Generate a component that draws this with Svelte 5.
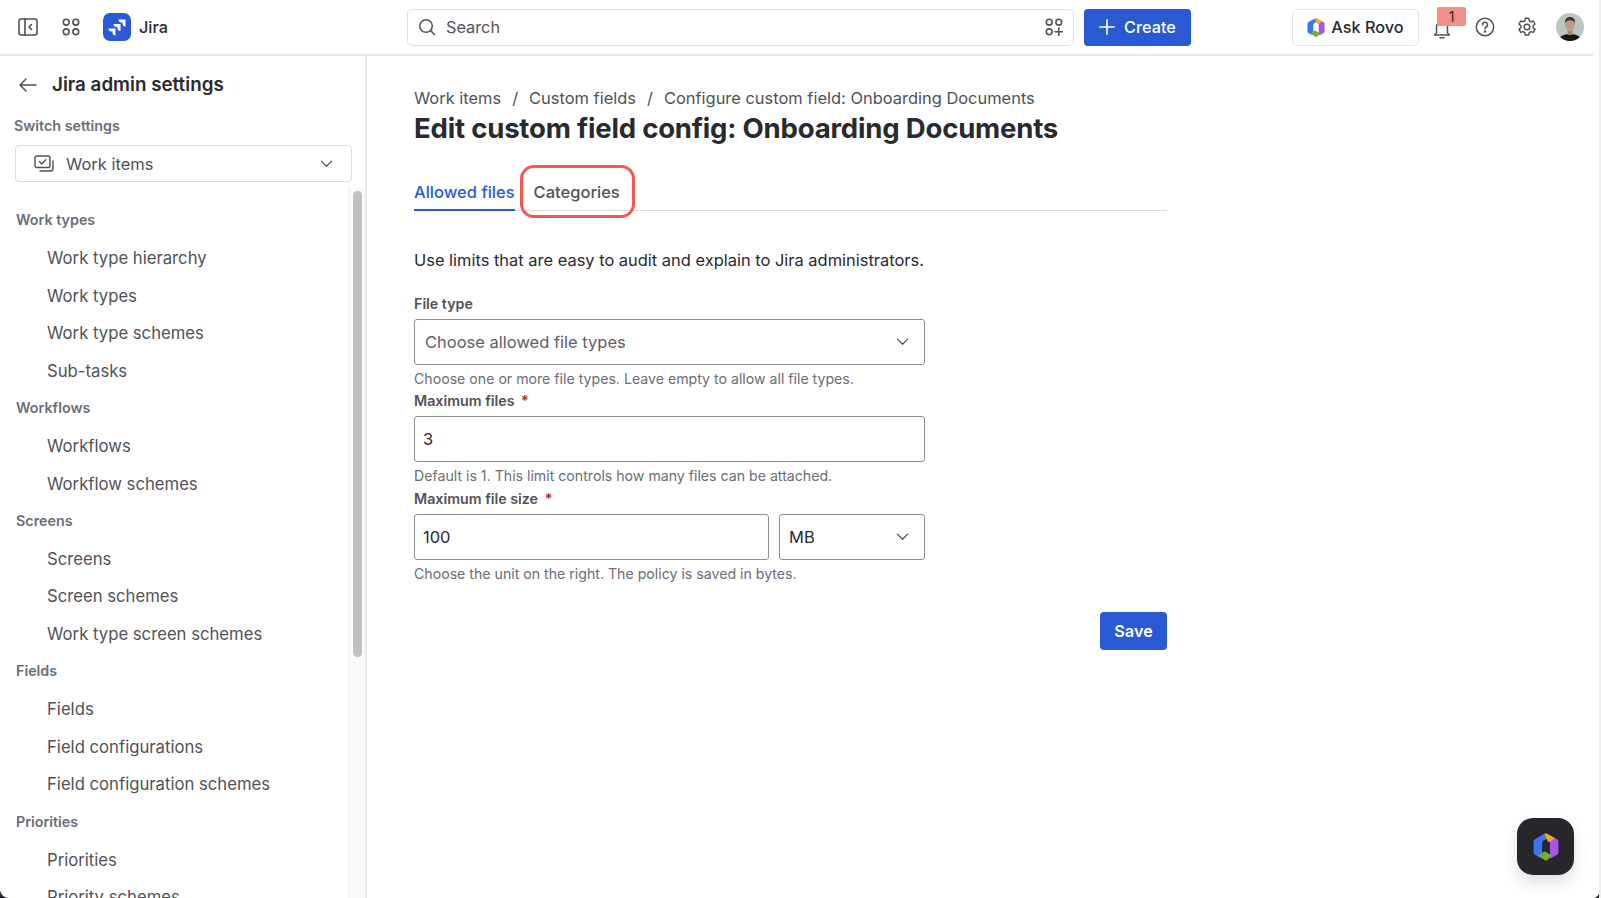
<script>
  const groups = [
    { title: 'Work types', items: ['Work type hierarchy', 'Work types', 'Work type schemes', 'Sub-tasks'] },
    { title: 'Workflows', items: ['Workflows', 'Workflow schemes'] },
    { title: 'Screens', items: ['Screens', 'Screen schemes', 'Work type screen schemes'] },
    { title: 'Fields', items: ['Fields', 'Field configurations', 'Field configuration schemes'] },
    { title: 'Priorities', items: ['Priorities', 'Priority schemes'] }
  ];
</script>

{#snippet chevron()}
  <svg class="chev" viewBox="0 0 14 14" width="13" height="13" fill="none" stroke="#505258" stroke-width="1.300" stroke-linecap="round" stroke-linejoin="round"><path d="M1.500 4.500 7 10 12.500 4.500"/></svg>
{/snippet}

{#snippet rovo(w, h)}
  <svg viewBox="2 0.500 20 23" width={w} height={h}>
    <path d="M10.500 1.900 3.500 6Q2.500 6.600 2.500 7.800V16.200Q2.500 17.400 3.500 18L8 20.600Q9 18 9 16V9Q9 7.800 10 7.200L13 5.500Z" fill="#3d76ee"/>
    <path d="M15.500 3.300 20.500 6Q21.500 6.600 21.500 7.800V16.200Q21.500 17.400 20.500 18L15.500 20.900Q15 19 15 17V8Q15 5 15.500 3.300Z" fill="#a855ee"/>
    <path d="M10.600 2 11 1.800Q12 1.200 13 1.800L19 5.300 15.500 7.800Q14.500 8.400 13.500 7.900Z" fill="#f5a524"/>
    <path d="M6 18.500 10 15.800Q11 15.200 12 15.800L16.500 18.800 13 22.200Q12 22.800 11 22.200Z" fill="#6fae3c"/>
  </svg>
{/snippet}

<div class="app">
  <header class="top">
    <div class="left">
      <svg class="ico" viewBox="0 0 20 18" width="20" height="18" fill="none" stroke="#505258" stroke-width="1.600" stroke-linejoin="round" stroke-linecap="round"><rect x="1" y="1" width="18" height="16" rx="2"/><path d="M7 1v16M13.500 6.500 11 9l2.500 2.500"/></svg>
      <svg class="ico" viewBox="0 0 18 18" width="18" height="18" fill="none" stroke="#505258" stroke-width="1.600"><circle cx="4.200" cy="4.200" r="2.900"/><circle cx="13.800" cy="4.200" r="2.900"/><circle cx="4.200" cy="13.800" r="2.900"/><circle cx="13.800" cy="13.800" r="2.900"/></svg>
      <div class="brand">
        <span class="logo">
          <svg viewBox="0 0 20 20" width="20" height="20" fill="#fff"><path d="M11.500 2.500H18.500V9.500C16.500 9.500 15.500 8.500 15.500 6.500V5.500H14.500C12.500 5.500 11.500 4.500 11.500 2.500Z"/><path d="M6.500 7H13.500V14C11.500 14 10.500 13 10.500 11V10H9.500C7.500 10 6.500 9 6.500 7Z"/><path d="M1.500 11.500H8.500V18.500C6.500 18.500 5.500 17.500 5.500 15.500V14.500H4.500C2.500 14.500 1.500 13.500 1.500 11.500Z"/></svg>
        </span>
        <span class="jira">Jira</span>
      </div>
    </div>
    <div class="search">
      <svg viewBox="0 0 18 18" width="18" height="18" fill="none" stroke="#505258" stroke-width="1.500" stroke-linecap="round"><circle cx="8" cy="8" r="6.300"/><path d="M12.600 12.600 16.500 16.500"/></svg>
      <span class="ph">Search</span>
      <svg class="spark" viewBox="0 0 18 18" width="18" height="18" fill="none" stroke="#505258" stroke-width="1.600" stroke-linecap="round"><circle cx="4.200" cy="4.200" r="2.900"/><circle cx="13.800" cy="4.200" r="2.900"/><circle cx="4.200" cy="13.800" r="2.900"/><path d="M13.800 10v7.500M10 13.800h7.500"/></svg>
    </div>
    <button class="create"><svg viewBox="0 0 16 16" width="16" height="16" fill="none" stroke="#fff" stroke-width="1.600" stroke-linecap="round"><path d="M8 .8v14.400M.8 8h14.400"/></svg>Create</button>
    <div class="right">
      <button class="ask">{@render rovo(18, 21)}<span>Ask Rovo</span></button>
      <div class="bell">
        <svg viewBox="0 0 18 20" width="18" height="20" fill="none" stroke="#505258" stroke-width="1.500" stroke-linejoin="round" stroke-linecap="round"><path d="M3.500 14V8a5.500 5.500 0 0 1 11 0v6l2 2H1.500zM7 18.800h4"/></svg>
        <span class="badge">1</span>
      </div>
      <svg class="help" viewBox="0 0 20 20" width="20" height="20" fill="none" stroke="#505258" stroke-width="1.500" stroke-linecap="round"><circle cx="10" cy="10" r="8.700"/><path d="M7.500 7.800a2.500 2.500 0 1 1 3.700 2.200c-.8.500-1.200 1-1.200 1.800"/><circle cx="10" cy="14.600" r=".5" fill="#505258"/></svg>
      <svg class="gear" viewBox="0 0 20 20" width="20" height="20" fill="none" stroke="#505258" stroke-width="1.500" stroke-linejoin="round"><circle cx="10" cy="10" r="2.800"/><path d="M8.300 1.300h3.400l.5 2.500 1.700 1 2.400-.8 1.700 3-1.900 1.700v2l1.900 1.700-1.700 3-2.400-.8-1.700 1-.5 2.500H8.300l-.5-2.500-1.700-1-2.400.8-1.700-3 1.900-1.700v-2L2 7l1.700-3 2.400.8 1.700-1z"/></svg>
      <svg class="avatar" viewBox="0 0 28 28" width="28" height="28"><defs><clipPath id="av"><circle cx="14" cy="14" r="14"/></clipPath></defs><g clip-path="url(#av)"><rect width="28" height="28" fill="#bcc6c1"/><path d="M3 28c.5-5 4-7 11-7s10.500 2 11 7z" fill="#171616"/><rect x="11.500" y="16" width="5" height="6" fill="#a9836e"/><ellipse cx="14" cy="12" rx="4.800" ry="6.300" fill="#c09a84"/><path d="M9 10.500c-.5-4.500 2.200-6.500 5-6.500s5.500 2 5 6.500c-1-2.300-2.500-3.200-5-3.200s-4 .9-5 3.200z" fill="#3f322a"/></g></svg>
    </div>
  </header>

  <div class="body">
    <aside class="side">
      <div class="side-head">
        <svg viewBox="0 0 18 14" width="18" height="14" fill="none" stroke="#505258" stroke-width="1.500" stroke-linecap="round" stroke-linejoin="round"><path d="M1 7h16M7 1 1 7l6 6"/></svg>
        <span>Jira admin settings</span>
      </div>
      <div class="switch">Switch settings</div>
      <div class="picker">
        <svg viewBox="0 0 20 18" width="20" height="18" fill="none" stroke="#505258" stroke-width="1.400" stroke-linecap="round" stroke-linejoin="round"><rect x="1" y="1" width="15" height="11.500" rx="2"/><path d="M5.500 6.700 7.800 9l4-4.300M19 6v7.500a2.500 2.500 0 0 1-2.500 2.500H6"/></svg>
        <span>Work items</span>
        {@render chevron()}
      </div>
      <div class="scrollwrap">
        <nav class="nav">
          {#each groups as g}
            <div class="gt">{g.title}</div>
            {#each g.items as it}
              <div class="it">{it}</div>
            {/each}
          {/each}
        </nav>
        <div class="track"><div class="thumb"></div></div>
      </div>
    </aside>

    <main class="main">
      <div class="crumbs"><span>Work items</span><i>/</i><span>Custom fields</span><i>/</i><span>Configure custom field: Onboarding Documents</span></div>
      <h1>Edit custom field config: Onboarding Documents</h1>
      <div class="tabs">
        <div class="tab on">Allowed files</div>
        <div class="tab">Categories<span class="ring"></span></div>
      </div>
      <p class="desc">Use limits that are easy to audit and explain to Jira administrators.</p>

      <div class="form">
        <div class="lbl">File type</div>
        <div class="field"><span class="muted">Choose allowed file types</span>{@render chevron()}</div>
        <div class="hint">Choose one or more file types. Leave empty to allow all file types.</div>

        <div class="lbl">Maximum files <b>*</b></div>
        <div class="field tight"><span>3</span></div>
        <div class="hint">Default is 1. This limit controls how many files can be attached.</div>

        <div class="lbl">Maximum file size <b>*</b></div>
        <div class="row">
          <div class="field tight grow"><span>100</span></div>
          <div class="field unit"><span>MB</span>{@render chevron()}</div>
        </div>
        <div class="hint">Choose the unit on the right. The policy is saved in bytes.</div>
      </div>
      <div class="actions"><button class="save">Save</button></div>
    </main>
  </div>

  <div class="fab">{@render rovo(26, 30)}</div>
</div>

<style>
  :global(html), :global(body) { margin: 0; background: #fff; }
  .app {
    position: relative;
    width: 1601px;
    height: 898px;
    overflow: hidden;
    font-family: Inter, "Noto Sans", sans-serif;
    color: #292a2e;
    background: #fff;
    display: flex;
    flex-direction: column;
    -webkit-font-smoothing: antialiased;
  }
  .app::before {
    content: "";
    position: absolute;
    left: 0;
    bottom: 0;
    width: 9px;
    height: 9px;
    z-index: 3;
    background: radial-gradient(circle at 100% 0, transparent 8.500px, #23252a 9.500px);
  }
  .app::after {
    content: "";
    position: absolute;
    right: 0;
    top: 0;
    bottom: 0;
    width: 8px;
    z-index: 3;
    background:
      radial-gradient(circle at 0 calc(100% - 6px), transparent 5.500px, #23252a 6.500px) left bottom / 6px 6px no-repeat,
      linear-gradient(#fff, #fff) left top / 6px 100% no-repeat,
      linear-gradient(#eeeeef, #eeeeef);
  }
  .top {
    height: 54px;
    flex: none;
    display: flex;
    align-items: center;
    border-bottom: 2px solid #e9e9e9;
    margin-right: 3px;
    position: relative;
  }
  .left { display: flex; align-items: center; width: 407px; padding-left: 18px; box-sizing: border-box; gap: 23.500px; flex: none; }
  .brand { display: flex; align-items: center; gap: 8px; }
  .logo { width: 28px; height: 28px; border-radius: 7px; background: #2a5ad6; display: flex; align-items: center; justify-content: center; }
  .jira { font-size: 16.300px; font-weight: 500; }
  .search {
    width: 667px; height: 37px; box-sizing: border-box; flex: none;
    border: 1px solid #dfe0e2; border-radius: 5px;
    display: flex; align-items: center; padding: 0 10px; gap: 10px;
  }
  .ph { font-size: 16.300px; color: #505258; flex: 1; }
  .create {
    margin-left: 10px; width: 107px; height: 37px; flex: none; border: 0; border-radius: 4px;
    background: #2a59d4; color: #fff; font: 500 16.300px Inter, sans-serif;
    display: flex; align-items: center; justify-content: center; gap: 9px;
  }
  .right { margin-left: 101px; display: flex; align-items: center; flex: none; }
  .ask {
    width: 127px; height: 37px; border: 1px solid #e3e4e6; border-radius: 5px; background: #fff;
    font: 500 16.300px Inter, sans-serif; color: #292a2e;
    display: flex; align-items: center; justify-content: center; gap: 6px; padding: 0;
  }
  .bell { position: relative; width: 18px; height: 20px; margin-left: 14px; margin-top: 4px; }
  .badge {
    position: absolute; left: 4px; top: -12px; width: 29px; height: 19px;
    background: #f28f86; border-radius: 2px; font-size: 14px; text-align: center; line-height: 19px; color: #292a2e;
  }
  .help { margin-left: 24px; }
  .gear { margin-left: 22px; }
  .avatar { margin-left: 19px; }

  .body { flex: 1; display: flex; min-height: 0; }
  .side { width: 367px; flex: none; box-sizing: border-box; border-right: 2px solid #e9e9e9; display: flex; flex-direction: column; min-height: 0; }
  .side-head { display: flex; align-items: center; gap: 15px; height: 57px; padding-left: 19px; flex: none; }
  .side-head span { font-size: 18.800px; font-weight: 600; }
  .switch { font-size: 14.300px; font-weight: 600; color: #6b6e76; padding-left: 14px; height: 20px; line-height: 20px; margin-top: 3px; flex: none; }
  .picker {
    margin: 9px 0 0 15px; width: 337px; height: 37px; box-sizing: border-box; flex: none;
    border: 1px solid #dcdcde; border-radius: 4px; padding: 0 18px;
    display: flex; align-items: center; gap: 12px;
    font-size: 16.500px; color: #505258;
  }
  .picker span { flex: 1; }
  .scrollwrap { flex: 1; display: flex; min-height: 0; overflow: hidden; margin-top: 5px; position: relative; }
  .nav { flex: 1; padding: 14px 0 0 16px; display: flex; flex-direction: column; }
  .gt { height: 37.600px; line-height: 37.600px; font-size: 14.300px; font-weight: 600; color: #6b6e76; flex: none; }
  .it { height: 37.600px; box-sizing: border-box; padding-top: 1.500px; line-height: 37.600px; padding-left: 31px; font-size: 16.700px; color: #505258; flex: none; white-space: nowrap; }
  .track { width: 17px; flex: none; background: #fafafa; border-left: 1px solid #efefef; box-sizing: border-box; padding: 4px 3px 0 4px; }
  .thumb { width: 9px; height: 466px; border-radius: 5px; background: #c1c1c1; }

  .main { flex: 1; padding: 30px 0 0 47px; }
  .crumbs { display: flex; font-size: 16.450px; color: #505258; height: 24px; line-height: 24px; }
  .crumbs i { font-style: normal; margin: 0 11px; }
  h1 { margin: 0; font-size: 27.550px; line-height: 36px; font-weight: 700; letter-spacing: -0.200px; color: #292a2e; }
  .tabs { display: flex; width: 753px; border-bottom: 1px solid #dcdcde; height: 46px; margin-top: 18px; }
  .tab { position: relative; font-size: 16.500px; font-weight: 500; color: #505258; line-height: 36px; padding-top: 10px; height: 36px; margin-right: 19px; }
  .tab.on { color: #2a59d4; border-bottom: 2px solid #2a59d4; height: 35px; }
  .ring { position: absolute; left: -14px; right: -15px; top: 1px; bottom: -8px; border: 3px solid #ef5b53; border-radius: 14px; }
  .desc { margin: 36px 0 0; font-size: 16.470px; line-height: 26px; color: #292a2e; }
  .form { width: 511px; margin-top: 20.600px; }
  .lbl { font-size: 14.250px; font-weight: 600; color: #505258; line-height: 20px; height: 25px; }
  .lbl b { color: #ae2e24; font-weight: 600; margin-left: 3px; }
  .field {
    height: 46px; box-sizing: border-box; border: 1px solid #8c8f97; border-radius: 3px;
    display: flex; align-items: center; justify-content: space-between;
    padding: 0 15px 0 10px; font-size: 16.500px; color: #292a2e;
  }
  .field.tight { padding-left: 8px; }
  .muted { color: #5e6168; }
  .hint { font-size: 14.150px; line-height: 20px; height: 26.600px; padding-top: 4px; box-sizing: border-box; color: #6b6e76; }
  .row { display: flex; gap: 10px; }
  .grow { flex: 1; }
  .unit { width: 146px; flex: none; padding-left: 9px; }
  .actions { width: 753px; display: flex; justify-content: flex-end; margin-top: 25.400px; }
  .save { width: 67px; height: 38px; border: 0; border-radius: 4px; background: #2a59d4; color: #fff; font: 600 16.300px Inter, sans-serif; padding: 0; }
  .fab {
    position: absolute; left: 1517px; top: 818px; width: 57px; height: 57px; border-radius: 16px;
    background: #26262b; display: flex; align-items: center; justify-content: center;
    box-shadow: 0 8px 16px rgba(0,0,0,.12);
  }
</style>
